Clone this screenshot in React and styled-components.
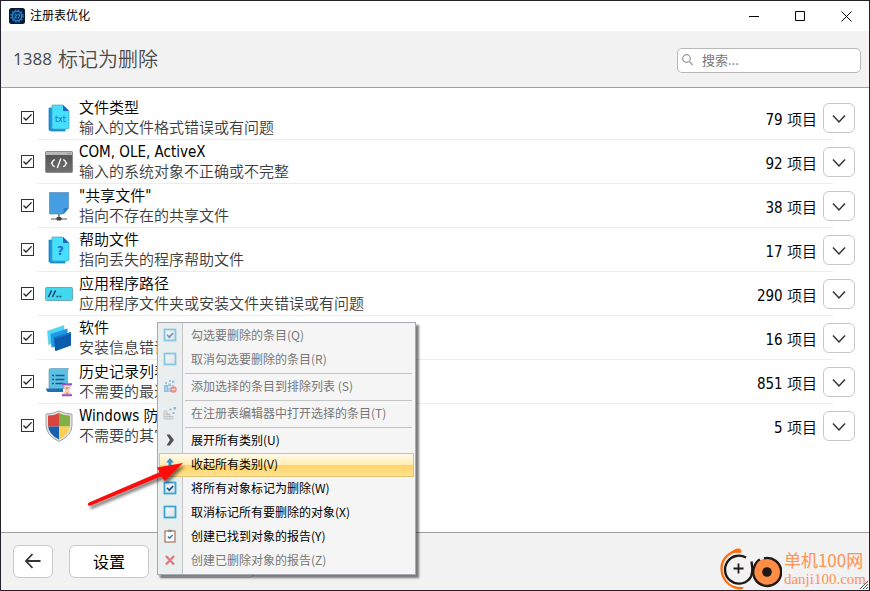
import React, { useState } from "react";
import styled, { createGlobalStyle, css } from "styled-components";

const GlobalStyle = createGlobalStyle`
  * { box-sizing: border-box; }
  body {
    margin: 0;
    background: #fff;
    color: #000;
    font-family: "DejaVu Sans Condensed", "Noto Sans CJK SC", sans-serif;
    font-size: 15px;
  }
  button, input { font: inherit; color: inherit; }
  svg { display: block; }
`;

const Window = styled.div`
  position: relative;
  display: flex;
  flex-direction: column;
  min-height: 100vh;
  border: 1px solid #25212b;
  overflow: hidden;
`;

const TitleBar = styled.header`
  display: flex;
  align-items: center;
  height: 30px;
  padding-left: 8px;
  gap: 5px;
  font-family: "Noto Sans CJK SC", sans-serif;
  font-size: 12px;
  line-height: 16px;
`;

const TitleText = styled.span`
  flex: 1;
  padding-bottom: 2px;
`;

const WindowControls = styled.div`
  display: flex;
  height: 100%;
`;

const CaptionButton = styled.button`
  display: grid;
  place-items: center;
  width: 46px;
  height: 100%;
  padding: 0;
  border: 0;
  background: none;
`;

const Header = styled.div`
  display: flex;
  align-items: center;
  justify-content: space-between;
  height: 57px;
  padding: 0 8px 0 12px;
  background: #f2f2f2;
  border-bottom: 1px solid #a0a0a0;
`;

const Heading = styled.h1`
  display: flex;
  align-items: center;
  gap: 6px;
  margin: 0;
  color: #4a4a4a;
  font-family: "Noto Sans CJK SC", sans-serif;
  font-size: 20px;
  font-weight: 350;
  line-height: 24px;
`;

const HeadingCount = styled.span`
  font-family: "Open Sans", sans-serif;
  font-size: 17px;
  font-weight: 400;
`;

const SearchBox = styled.label`
  display: flex;
  align-items: center;
  gap: 9px;
  width: 184px;
  height: 25px;
  margin-top: 2px;
  padding: 0 4px;
  border: 1px solid #b8b8b8;
  border-radius: 5px;
  background: #fff;
`;

const SearchInput = styled.input`
  flex: 1;
  min-width: 0;
  padding: 0;
  border: 0;
  outline: 0;
  background: none;
  font-family: "Noto Sans CJK SC", sans-serif;
  font-size: 13px;
  line-height: 20px;
  &::placeholder { color: #777; opacity: 1; }
`;

const Main = styled.main`
  flex: 1;
  padding: 8px 14px 0 20px;
`;

const List = styled.ul`
  margin: 0;
  padding: 0;
  list-style: none;
`;

const Row = styled.li`
  display: grid;
  grid-template-columns: 16px minmax(0, 1fr);
  height: 44px;
`;

const RowBody = styled.div`
  display: grid;
  grid-template-columns: 28px minmax(0, 1fr) auto 32px;
  align-items: center;
  padding-left: 8px;
  column-gap: 6px;
  background: ${(p) =>
    p.$last
      ? "none"
      : "linear-gradient(#ececec, #ececec) left bottom / calc(100% - 22px) 1px no-repeat"};
`;

const CheckCell = styled.span`
  display: grid;
  align-content: center;
  justify-content: start;
  padding-bottom: 2px;
  & > * { grid-area: 1 / 1; }
  & > svg { pointer-events: none; visibility: hidden; }
  & > input:checked + svg { visibility: visible; }
`;

const CheckBox = styled.input`
  appearance: none;
  width: 13px;
  height: 13px;
  margin: 0;
  border: 1px solid #333;
  background: #fff;
`;

const RowIcon = styled.span`
  display: grid;
  place-items: center;
`;

const RowText = styled.label`
  display: flex;
  flex-direction: column;
  font-weight: 350;
  line-height: 20px;
  white-space: nowrap;
`;

const RowTitle = styled.span`
  color: #000;
`;

const RowNote = styled.span`
  color: #3c3c3c;
`;

const Count = styled.span`
  font-weight: 350;
  white-space: nowrap;
`;

const boxed = css`
  display: grid;
  place-items: center;
  padding: 0;
  border: 1px solid #c8c8c8;
  background: #fff;
`;

const ExpandButton = styled.button`
  ${boxed}
  width: 32px;
  height: 30px;
  padding-top: 2px;
  border-radius: 6px;
`;

const Footer = styled.footer`
  display: flex;
  align-items: center;
  height: 58px;
  padding: 0 3px 0 12px;
  background: #f2f2f2;
  border-top: 1px solid #a0a0a0;
`;

const FooterButton = styled.button`
  ${boxed}
  width: ${(p) => p.$width};
  height: 33px;
  margin-right: ${(p) => p.$gap || "0"};
  padding-bottom: 2px;
  border-radius: 6px;
  font-size: 16px;
`;

const Brand = styled.a`
  display: flex;
  align-items: center;
  gap: 2px;
  margin: 15px 0 0 auto;
  color: #ff934f;
  text-decoration: none;
`;

const BrandText = styled.span`
  display: flex;
  flex-direction: column;
  white-space: nowrap;
`;

const BrandName = styled.span`
  font-family: "Noto Sans CJK SC", sans-serif;
  font-size: 17px;
  line-height: 20px;
`;

const BrandHost = styled.span`
  font-family: "Liberation Serif", serif;
  font-size: 15px;
  line-height: 18px;
`;

const Grip = styled.svg`
  position: absolute;
  right: 0;
  bottom: 0;
`;

const Menu = styled.div`
  position: absolute;
  left: 156px;
  top: 321px;
  width: 259px;
  padding: 1px;
  border: 1px solid #a7abb0;
  background: linear-gradient(90deg, #e9eeee 24px, #c5c5c5 24px, #c5c5c5 25px, #f5f5f5 25px);
  box-shadow: 3px 3px 2px rgba(0, 0, 0, 0.5);
  font-family: "Noto Sans CJK SC", sans-serif;
  font-size: 12px;
  line-height: 16px;
`;

const MenuItem = styled.button`
  display: grid;
  grid-template-columns: 20px 1fr;
  align-items: center;
  column-gap: 11px;
  width: 100%;
  height: 24px;
  padding: 0 0 2px;
  border: 1px solid transparent;
  background: none;
  text-align: left;
  white-space: nowrap;
  color: #000;
  &:disabled { color: #777; }
  &:disabled svg { opacity: 0.55; }
  ${(p) =>
    p.$active &&
    css`
      border-color: #e0c36c;
      background: linear-gradient(#fffbea, #ffedb5 48%, #ffd463 49%, #ffe192);
    `}
`;

const MenuIcon = styled.span`
  display: grid;
  place-items: center;
`;

const MenuRule = styled.hr`
  height: 1px;
  margin: 1px 2px 1px 26px;
  border: 0;
  background: #c4c4c4;
`;

const Pointer = styled.svg`
  position: absolute;
  left: 79px;
  top: 448px;
  pointer-events: none;
`;

const CheckMark = () => (
  <svg width="13" height="13" viewBox="0 0 13 13" fill="none" stroke="#222" strokeWidth="1.3">
    <path d="M2.5 6.5 5 9l5.6-5.6" />
  </svg>
);

const AppIcon = () => (
  <svg width="16" height="16" viewBox="0 0 16 16">
    <rect width="16" height="16" rx="2.5" fill="#10182f" />
    <circle cx="8" cy="8" r="6" fill="none" stroke="#1673c4" strokeWidth="1.6" strokeDasharray="1.7 1.45" />
    <circle cx="8" cy="8" r="4.8" fill="#11365f" stroke="#1d8be0" strokeWidth="1.2" />
    <path d="M5.4 6.8h2.1v1L5.6 9.6h2.2M8.7 6.8h2.2L9.4 9.8" fill="none" stroke="#39a8ee" strokeWidth=".8" />
  </svg>
);

const PageIcon = ({ mark }) => (
  <svg width="24" height="28" viewBox="0 0 24 28">
    <path d="M2 4h16v23H3.5L2 25.500z" fill="#1795e0" stroke="#0e7fc5" strokeWidth=".7" />
    <path d="M5 1h11l6 6v16.500q0 1.500-1.500 1.500h-14Q5 25 5 23.500z" fill="#46e0ff" stroke="#5b9fae" strokeWidth=".7" />
    <path d="M16 1l6 6h-6z" fill="#1a67c8" />
    <text
      x="13.500"
      y={mark === "?" ? 19 : 18}
      fontSize={mark === "?" ? 12 : 8}
      fill="#2768c8"
      textAnchor="middle"
      fontFamily="DejaVu Sans, sans-serif"
      fontWeight={mark === "?" ? 700 : 400}
    >
      {mark}
    </text>
  </svg>
);

const CodeIcon = () => (
  <svg width="28" height="22" viewBox="0 0 28 22">
    <defs>
      <linearGradient id="code-face" x1="0" y1="0" x2="0" y2="1">
        <stop offset="0" stopColor="#505050" />
        <stop offset="1" stopColor="#707070" />
      </linearGradient>
    </defs>
    <rect x=".5" y=".5" width="27" height="21" rx="1" fill="url(#code-face)" stroke="#8d8d8d" />
    <path d="M1 1h26v3H1z" fill="#b9b9b9" />
    <path d="M22.500 2.500h1M24.500 2.500h1" stroke="#777" />
    <path d="M9.800 8.700Q7.500 9.500 7.500 11L6.500 12.200l1 1.200q0 1.500 2.300 2.300M18.200 8.700q2.300.8 2.300 2.300l1 1.200-1 1.200q0 1.500-2.300 2.300M15.800 7.500l-3.500 9.500" fill="none" stroke="#fff" strokeWidth="1.400" />
  </svg>
);

const SharedIcon = () => (
  <svg width="22" height="30" viewBox="0 0 22 30">
    <path d="M1.500 1.500h19V17l-5 6h-14z" fill="#459edf" stroke="#5a8db5" strokeWidth=".7" />
    <path d="M20.500 17l-5 6v-4.500q0-1.500 1.500-1.500z" fill="#247bc2" />
    <path d="M11 23v4" stroke="#777" strokeWidth="1.600" />
    <path d="M3 28h16" stroke="#a0a0a0" strokeWidth="1.800" />
    <rect x="8.500" y="26" width="5" height="3.500" rx="1" fill="#444" />
  </svg>
);

const PathIcon = () => (
  <svg width="28" height="14" viewBox="0 0 28 14">
    <rect x=".5" y=".5" width="27" height="13" rx="1" fill="#43d8f0" stroke="#6aaab9" />
    <path d="M3.500 10 6.500 3.500M7.500 10l3-6.500" stroke="#143f70" strokeWidth="1.500" />
    <path d="M11.500 9.500h1.800M14.500 9.500h1.800" stroke="#143f70" strokeWidth="1.600" />
  </svg>
);

const SoftwareIcon = () => (
  <svg width="26" height="28" viewBox="0 0 26 28">
    <path d="M1.500 7 18 1.500V17L2.500 20.500z" fill="#4ed6f7" stroke="#7fb9c9" strokeWidth=".5" />
    <path d="M4.500 10 21.500 4.500V20L5.500 23.500z" fill="#1c9ae4" />
    <path d="M8 13.500 25 8v13.500L10 27q-1 0-1-1z" fill="#0c5cab" />
    <path d="M8 13.500 25 8v2L8.200 15z" fill="#1a74c8" />
  </svg>
);

const HistoryIcon = () => (
  <svg width="28" height="30" viewBox="0 0 28 30">
    <path d="M4 3q0-1.500 1.500-1.500h18Q22.500 3 22.500 5v16.500H4z" fill="#5cc0e5" stroke="#6ca0b4" strokeWidth=".7" />
    <path d="M1 21.500h17V25H3.500Q1.500 25 1 21.500z" fill="#1770b8" />
    <path d="M7 8.500h2M7 12.500h2M7 16.500h2M10.500 8.500h9M10.500 12.500h9M10.500 16.500h9" stroke="#155a8e" strokeWidth="1.500" />
    <path d="M18.500 18h7q0 4-2.500 5.500 2.500 1.500 2.500 5h-7q0-3.500 2.500-5-2.500-1.500-2.500-5.500z" fill="#fde4d2" stroke="#b98a9c" strokeWidth=".6" />
    <path d="M20 20h4l-2 3zM20 27l2-2.500 2 2.500z" fill="#f39231" />
    <path d="M17 17.200h10M17 28.300h10" stroke="#9a4fc0" strokeWidth="2" />
  </svg>
);

const ShieldIcon = () => (
  <svg width="28" height="32" viewBox="0 0 28 32">
    <defs>
      <clipPath id="shield-face">
        <path d="M14 3q5 2.500 11 2.500V15q0 9-11 14.500Q3 24 3 15V5.500Q9 5.500 14 3z" />
      </clipPath>
    </defs>
    <path d="M14 1q6 3 13 3v11q0 10.500-13 16.500Q1 25.500 1 15V4q7 0 13-3z" fill="#e4e4e4" stroke="#999" strokeWidth=".9" />
    <g clipPath="url(#shield-face)">
      <path d="M0 0h14v16.500H0z" fill="#d9443f" />
      <path d="M14 0h14v16.500H14z" fill="#83b044" />
      <path d="M0 16.500h14V32H0z" fill="#1761ac" />
      <path d="M14 16.500h14V32H14z" fill="#ffcf50" />
    </g>
  </svg>
);

const ChevronDown = () => (
  <svg width="14" height="10" viewBox="0 0 14 10" fill="none" stroke="#333" strokeWidth="1.500">
    <path d="M1 1.500l6 6.500 6-6.500" />
  </svg>
);

const BoxIcon = ({ checked }) => (
  <svg width="14" height="14" viewBox="0 0 14 14">
    <defs>
      <linearGradient id="box-face" x1="0" y1="0" x2="1" y2="1">
        <stop offset="0" stopColor="#fff" />
        <stop offset="1" stopColor="#d5dde2" />
      </linearGradient>
    </defs>
    <rect x="1.500" y="1.500" width="11" height="11" fill="url(#box-face)" stroke="#36a6d8" strokeWidth="1.800" />
    {checked && <path d="M4 6.800l2.200 2.400L10.200 5" fill="none" stroke="#1b4f93" strokeWidth="1.700" />}
  </svg>
);

const ExcludeIcon = () => (
  <svg width="14" height="14" viewBox="0 0 14 14">
    <path d="M1 6h4v3h4v4H1z" fill="#4a9ad9" />
    <path d="M2 3h2v2H2zM5 4.500h3v3H5zM6 1h2v2H6zM9 1.500h2.500V4H9zM9 6h2v2H9z" fill="#6ba9d4" />
    <path d="M3 8v4M6 9v4" stroke="#c5dff0" strokeWidth=".8" />
    <circle cx="10.500" cy="10.500" r="3.200" fill="#e34343" />
    <path d="M8.800 10.500h3.400" stroke="#fff" strokeWidth="1.200" />
  </svg>
);

const RegistryIcon = () => (
  <svg width="14" height="14" viewBox="0 0 14 14">
    <path d="M1 5h3v3h3v2.500h3V13H1z" fill="#e0e0e0" stroke="#999" strokeWidth=".8" />
    <path d="M1 8h6M1 10.500h9M4 8v5M7 10.500V13" stroke="#999" strokeWidth=".8" />
    <path d="M6.500 2.500h2v2h-2zM10.500 1h2.500v2.500h-2.500zM9.500 6h2v2h-2z" fill="#4b8fcb" />
  </svg>
);

const ExpandIcon = () => (
  <svg width="14" height="14" viewBox="0 0 14 14">
    <path d="M3.500 1.500h3.200l4.300 5.500-4.300 5.500H3.500L7 7z" fill="#505050" />
  </svg>
);

const CollapseIcon = () => (
  <svg width="14" height="14" viewBox="0 0 14 14">
    <path d="M7 1l4 4.500H8.500V9h-3V5.500H3z" fill="#3b91cf" />
  </svg>
);

const ReportIcon = () => (
  <svg width="14" height="14" viewBox="0 0 14 14">
    <rect x="2" y="2" width="10" height="11" fill="#fff" stroke="#a77358" strokeWidth="1.200" />
    <path d="M5 .8h4v2H5z" fill="#888" />
    <path d="M4.800 7.500l1.800 1.800 3-3.300" fill="none" stroke="#3277c7" strokeWidth="1.300" />
  </svg>
);

const CrossIcon = () => (
  <svg width="14" height="14" viewBox="0 0 14 14">
    <path d="M3 3l8 8.500M11 3l-8 8.500" stroke="#dd1f33" strokeWidth="2.500" />
  </svg>
);

const BrandLogo = () => (
  <svg width="62" height="42" viewBox="0 0 62 42" fill="none">
    <path d="M20 3.500C10 2 1.500 11 1.500 20.500S8 40 21 40.500" stroke="#ff6d0d" strokeWidth="2.200" />
    <path d="M9 6Q14 .2 19 .5q2.500.5 2.500 3l-1 1.500Q14 3.500 9 6zM12 37.500q6 2 12 1.500L22 41.500q-6 .5-10-4z" fill="#ff6d0d" />
    <path d="M26 9.500A14 14 0 1 0 29 31.500Q34 27 31.500 13.500" stroke="#1e1816" strokeWidth="2.400" />
    <path d="M18.500 15.500v10M13.500 20.500h10" stroke="#1e1816" strokeWidth="1.800" />
    <circle cx="47" cy="24" r="13.500" fill="#ff8d45" />
    <path d="M44 10.300A14 14 0 1 1 34.500 18q2-5 5.500-6.500" stroke="#1e1816" strokeWidth="2.400" />
    <circle cx="47" cy="24" r="4.800" fill="#1e1816" />
  </svg>
);

const CATEGORIES = [
  { id: "types", title: "文件类型", note: "输入的文件格式错误或有问题", count: 79, icon: <PageIcon mark="txt" /> },
  { id: "com", title: "COM, OLE, ActiveX", note: "输入的系统对象不正确或不完整", count: 92, icon: <CodeIcon /> },
  { id: "shared", title: "\"共享文件\"", note: "指向不存在的共享文件", count: 38, icon: <SharedIcon /> },
  { id: "help", title: "帮助文件", note: "指向丢失的程序帮助文件", count: 17, icon: <PageIcon mark="?" /> },
  { id: "paths", title: "应用程序路径", note: "应用程序文件夹或安装文件夹错误或有问题", count: 290, icon: <PathIcon /> },
  { id: "software", title: "软件", note: "安装信息错误", count: 16, icon: <SoftwareIcon /> },
  { id: "history", title: "历史记录列表", note: "不需要的最近", count: 851, icon: <HistoryIcon /> },
  { id: "firewall", title: "Windows 防火", note: "不需要的其它", count: 5, icon: <ShieldIcon /> },
];

const MENU = [
  { text: "勾选要删除的条目(Q)", icon: <BoxIcon checked />, disabled: true },
  { text: "取消勾选要删除的条目(R)", icon: <BoxIcon />, disabled: true },
  { rule: true },
  { text: "添加选择的条目到排除列表 (S)", icon: <ExcludeIcon />, disabled: true },
  { rule: true },
  { text: "在注册表编辑器中打开选择的条目(T)", icon: <RegistryIcon />, disabled: true },
  { rule: true },
  { text: "展开所有类别(U)", icon: <ExpandIcon /> },
  { text: "收起所有类别(V)", icon: <CollapseIcon />, active: true },
  { text: "将所有对象标记为删除(W)", icon: <BoxIcon checked /> },
  { text: "取消标记所有要删除的对象(X)", icon: <BoxIcon /> },
  { text: "创建已找到对象的报告(Y)", icon: <ReportIcon /> },
  { text: "创建已删除对象的报告(Z)", icon: <CrossIcon />, disabled: true },
];

function CategoryRow({ item, last }) {
  const [checked, setChecked] = useState(true);
  return (
    <Row>
      <CheckCell>
        <CheckBox type="checkbox" id={item.id} checked={checked} onChange={(e) => setChecked(e.target.checked)} />
        <CheckMark />
      </CheckCell>
      <RowBody $last={last}>
        <RowIcon>{item.icon}</RowIcon>
        <RowText htmlFor={item.id}>
          <RowTitle>{item.title}</RowTitle>
          <RowNote>{item.note}</RowNote>
        </RowText>
        <Count>{item.count} 项目</Count>
        <ExpandButton type="button" aria-label={item.title}>
          <ChevronDown />
        </ExpandButton>
      </RowBody>
    </Row>
  );
}

export default function App() {
  return (
    <Window>
      <GlobalStyle />
      <TitleBar>
        <AppIcon />
        <TitleText>注册表优化</TitleText>
        <WindowControls>
          <CaptionButton type="button" aria-label="最小化">
            <svg width="11" height="11" stroke="#000"><path d="M0 5.500h10" /></svg>
          </CaptionButton>
          <CaptionButton type="button" aria-label="最大化">
            <svg width="11" height="11" fill="none" stroke="#000"><path d="M.5.5h9v9h-9z" /></svg>
          </CaptionButton>
          <CaptionButton type="button" aria-label="关闭">
            <svg width="11" height="11" stroke="#000"><path d="M.5.5l10 10M10.500.5l-10 10" /></svg>
          </CaptionButton>
        </WindowControls>
      </TitleBar>
      <Header>
        <Heading>
          <HeadingCount>1388</HeadingCount>
          标记为删除
        </Heading>
        <SearchBox>
          <svg width="11" height="12" viewBox="0 0 11 12" fill="none" stroke="#999" strokeWidth="1.200">
            <circle cx="4.500" cy="4.500" r="3.800" />
            <path d="M7.300 7.500l3.400 3.500" />
          </svg>
          <SearchInput type="search" placeholder="搜索..." aria-label="搜索" />
        </SearchBox>
      </Header>
      <Main>
        <List>
          {CATEGORIES.map((item, i) => (
            <CategoryRow key={item.id} item={item} last={i === CATEGORIES.length - 1} />
          ))}
        </List>
      </Main>
      <Footer>
        <FooterButton type="button" $width="40px" $gap="16px" aria-label="返回">
          <svg width="16" height="16" viewBox="0 0 16 16" fill="none" stroke="#333" strokeWidth="1.800">
            <path d="M15.500 8H1.500M7.500 1L1 8l6.500 7" />
          </svg>
        </FooterButton>
        <FooterButton type="button" $width="80px" $gap="8px">设置</FooterButton>
        <FooterButton type="button" $width="98px" aria-haspopup="menu" aria-controls="actions" />
        <Brand href="#">
          <BrandLogo />
          <BrandText>
            <BrandName>单机100网</BrandName>
            <BrandHost>danji100.com</BrandHost>
          </BrandText>
        </Brand>
      </Footer>
      <Grip width="10" height="10" stroke="#555" aria-hidden="true">
        <path d="M1 9l8-8M4 9l5-5M7 9l2-2" />
      </Grip>
      <Menu id="actions" role="menu">
        {MENU.map((item, i) =>
          item.rule ? (
            <MenuRule key={i} />
          ) : (
            <MenuItem key={i} type="button" role="menuitem" disabled={item.disabled} $active={item.active}>
              <MenuIcon>{item.icon}</MenuIcon>
              {item.text}
            </MenuItem>
          )
        )}
      </Menu>
      <Pointer width="110" height="64" viewBox="0 0 110 64" aria-hidden="true">
        <defs>
          <filter id="pointer-shadow" x="-20%" y="-20%" width="140%" height="150%">
            <feDropShadow dx="2" dy="3" stdDeviation="1.500" floodColor="#000" floodOpacity=".5" />
          </filter>
        </defs>
        <path
          d="M103 14 77 18.500l2.500 4.800L9 53.500q-2 1.500-1 2.500l1.500 1L81 27.500l4 4.500z"
          fill="#fb0909"
          filter="url(#pointer-shadow)"
        />
      </Pointer>
    </Window>
  );
}
